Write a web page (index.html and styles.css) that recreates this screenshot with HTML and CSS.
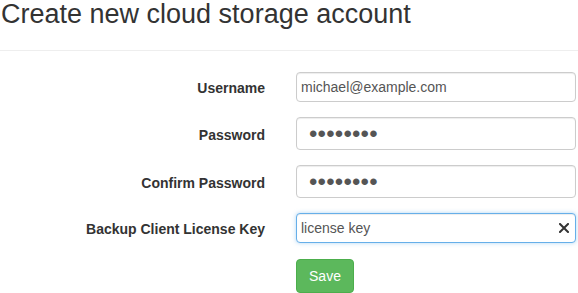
FILE: index.html
```html
<!DOCTYPE html>
<html lang="en">
<head>
<meta charset="utf-8">
<title>Create new cloud storage account</title>
<link rel="stylesheet" href="styles.css">
</head>
<body>
<div class="page">
  <h1 class="title">Create new cloud storage account</h1>
  <form class="form">
    <div class="row">
      <label class="label" for="user">Username</label>
      <input class="field text" id="user" type="text" value="michael@example.com">
    </div>
    <div class="row">
      <label class="label" for="pw">Password</label>
      <input class="field pw" id="pw" type="password" value="password">
    </div>
    <div class="row">
      <label class="label" for="pw2">Confirm Password</label>
      <input class="field pw" id="pw2" type="password" value="password">
    </div>
    <div class="row">
      <label class="label" for="key">Backup Client License Key</label>
      <div class="clearwrap">
        <input class="field text focus" id="key" type="text" value="license key">
        <span class="clear" aria-label="Clear">
          <svg width="10" height="10" viewBox="0 0 10 10"><path d="M1 1L9 9M9 1L1 9" stroke="#333" stroke-width="2" stroke-linecap="square" fill="none"/></svg>
        </span>
      </div>
    </div>
    <div class="row actions">
      <span></span>
      <div><button class="btn" type="button">Save</button></div>
    </div>
  </form>
</div>
</body>
</html>
```
FILE: styles.css
```css
html, body {
  margin: 0;
  padding: 0;
  background: #fff;
}
body {
  font-family: "Liberation Sans", Arial, sans-serif;
  color: #333;
  overflow: hidden;
}
.title {
  margin: 0;
  padding: 0 0 21px 1px;
  font-size: 27px;
  line-height: 29px;
  font-weight: normal;
  color: #333;
  border-bottom: 1px solid #eee;
}
.form {
  display: flex;
  flex-direction: column;
  gap: 15px;
  padding-top: 21px;
}
.row {
  display: grid;
  grid-template-columns: 266px 280px;
  column-gap: 30px;
  align-items: center;
}
.label {
  text-align: right;
  font-size: 14px;
  font-weight: bold;
  color: #333;
  padding-right: 1px;
  padding-top: 2px;
}
.field {
  box-sizing: border-box;
  width: 280px;
  margin: 0;
  border: 1px solid #ccc;
  border-radius: 4px;
  box-shadow: inset 0 1px 1px rgba(0,0,0,.075);
  font-family: "Liberation Sans", Arial, sans-serif;
  color: #555;
  background: #fff;
  outline: none;
  display: block;
}
.text {
  height: 30px;
  padding: 0 4px;
  font-size: 14px;
}
.pw {
  height: 33px;
  padding: 0 4px 0 12px;
  font-size: 24px;
  letter-spacing: 0.2px;
}
.focus {
  border-color: #66afe9;
  box-shadow: inset 0 1px 1px rgba(0,0,0,.075), 0 0 4px rgba(102,175,233,.5);
}
.clearwrap {
  position: relative;
  width: 280px;
}
.clear {
  position: absolute;
  right: 7px;
  top: 10px;
  width: 10px;
  height: 10px;
  display: block;
  line-height: 0;
}
.actions {
  margin-top: 1px;
}
.btn {
  box-sizing: border-box;
  width: 58px;
  height: 34px;
  padding: 0;
  border: 1px solid #4cae4c;
  border-radius: 4px;
  background: #5cb85c;
  color: #fff;
  font-family: "Liberation Sans", Arial, sans-serif;
  font-size: 14px;
  display: block;
}
```
